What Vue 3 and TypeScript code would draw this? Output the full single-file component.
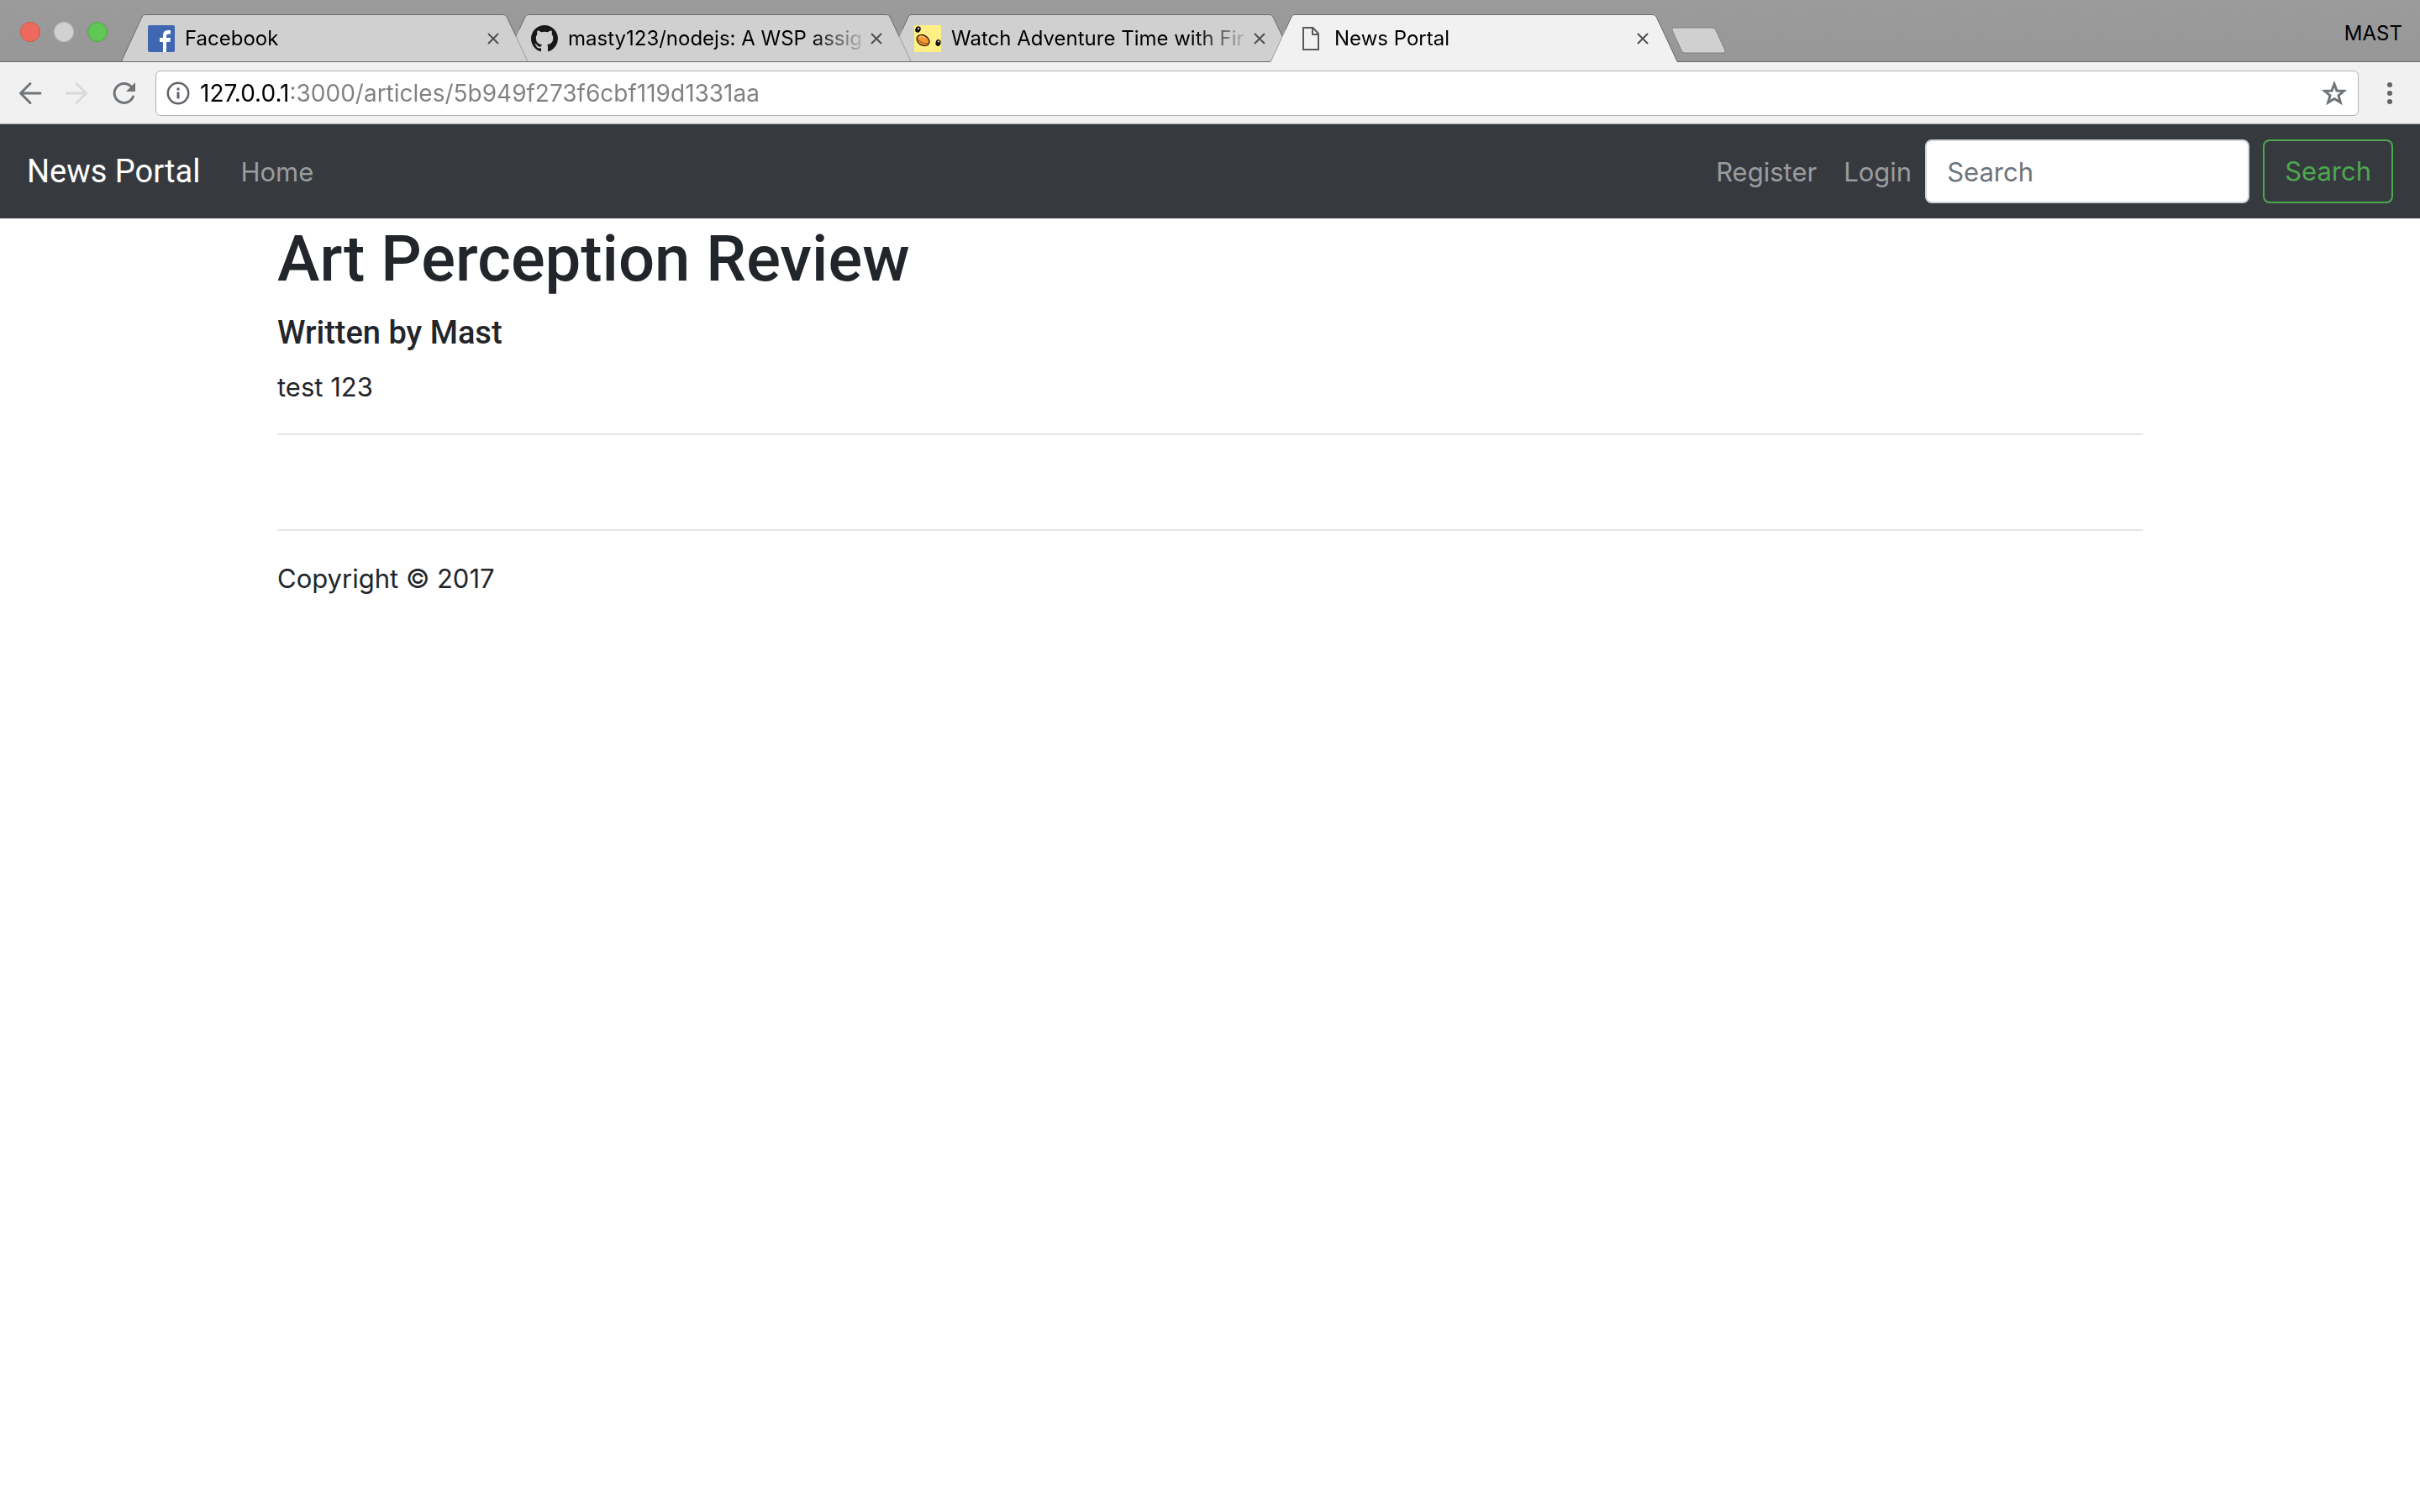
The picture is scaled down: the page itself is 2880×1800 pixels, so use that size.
<script setup lang="ts">
import { ref } from 'vue'

type Favicon = 'facebook' | 'github' | 'cartoon' | 'document'

interface Tab {
  title: string
  icon: Favicon
  active: boolean
}

const tabs: Tab[] = [
  { title: 'Facebook', icon: 'facebook', active: false },
  { title: 'masty123/nodejs: A WSP assig', icon: 'github', active: false },
  { title: 'Watch Adventure Time with Fin', icon: 'cartoon', active: false },
  { title: 'News Portal', icon: 'document', active: true },
]

const address = ref('127.0.0.1:3000/articles/5b949f273f6cbf119d1331aa')
const query = ref('')
</script>

<template>
  <div class="window">
    <header class="chrome">
      <div class="tab-strip">
        <div class="lights">
          <button class="light close" type="button" aria-label="Close window"></button>
          <button class="light minimize" type="button" aria-label="Minimize window"></button>
          <button class="light zoom" type="button" aria-label="Zoom window"></button>
        </div>

        <div class="tabs">
          <div
            v-for="(tab, i) in tabs"
            :key="tab.title"
            class="tab"
            :class="{ active: tab.active }"
            :style="{ zIndex: tab.active ? 10 : tabs.length - i }"
          >
            <svg class="tab-shape" viewBox="0 0 484 57" aria-hidden="true">
              <path class="fill" d="M0 57 L25 3 Q26 0 29 0 H455 Q458 0 459 3 L484 57 Z" />
              <path class="edge" d="M18 18 L25 3 Q26 0.500 29 0.500 H455 Q458 0.500 459 3 L470 26" />
              <path class="edge" :class="{ soft: i > 0 }" d="M0.500 56 L18 18" />
              <path class="edge" :class="{ soft: !tab.active }" d="M470 26 L484 56" />
            </svg>

            <svg v-if="tab.icon === 'facebook'" class="favicon" viewBox="0 0 32 32" aria-hidden="true">
              <rect width="32" height="32" rx="2" fill="#4267b2" />
              <path fill="#fff" d="M18 32 V20 H14 V15 H18 V12 Q18 6 24 6 H27 V10.500 H25 Q22 10.500 22 13 V15 H27 L26.400 20 H22 V32 Z" />
            </svg>
            <svg v-else-if="tab.icon === 'github'" class="favicon" viewBox="0 0 16 16" aria-hidden="true">
              <path
                fill="#191717"
                d="M8 0C3.580 0 0 3.580 0 8c0 3.540 2.290 6.530 5.470 7.590.4.070.55-.17.55-.38 0-.19-.01-.82-.01-1.490-2.010.37-2.530-.49-2.690-.94-.09-.23-.48-.94-.82-1.130-.28-.15-.68-.52-.01-.53.63-.01 1.080.58 1.230.82.72 1.210 1.870.87 2.330.66.070-.52.28-.87.51-1.070-1.780-.2-3.640-.89-3.640-3.950 0-.87.31-1.590.82-2.150-.08-.2-.36-1.020.08-2.120 0 0 .67-.21 2.200.82.64-.18 1.320-.27 2-.27s1.360.09 2 .27c1.530-1.040 2.200-.82 2.200-.82.44 1.100.16 1.920.08 2.120.51.56.82 1.270.82 2.150 0 3.070-1.870 3.750-3.650 3.950.29.25.54.73.54 1.480 0 1.070-.01 1.930-.01 2.200 0 .21.15.46.55.38A8.010 8.010 0 0 0 16 8c0-4.420-3.580-8-8-8z"
              />
            </svg>
            <svg v-else-if="tab.icon === 'cartoon'" class="favicon" viewBox="0 0 32 32" aria-hidden="true">
              <rect width="32" height="32" fill="#ffef84" />
              <ellipse cx="4.500" cy="5" rx="3.200" ry="3.800" fill="#111" transform="rotate(20 4.500 5)" />
              <circle cx="5" cy="4" r="1" fill="#fff" />
              <ellipse cx="28.500" cy="21" rx="3" ry="4" fill="#111" transform="rotate(15 28.500 21)" />
              <circle cx="29" cy="19.500" r="1" fill="#fff" />
              <ellipse cx="10.500" cy="18" rx="8" ry="5.800" fill="#f39a35" stroke="#3a210c" stroke-width="1.400" transform="rotate(30 10.500 18)" />
              <path d="M3.500 16 Q9 23 17.500 21.500" fill="none" stroke="#9c4d12" stroke-width="1.200" />
              <path d="M6 14 Q9 12 13 16" fill="none" stroke="#ffc277" stroke-width="1.500" />
            </svg>
            <svg v-else class="favicon" viewBox="0 0 32 32" aria-hidden="true">
              <path fill="none" stroke="#5a5a5a" stroke-width="2" d="M7 3 H18.500 L25 10 V29 H7 Z M18 3 V11 H25" />
            </svg>

            <span class="tab-title">{{ tab.title }}</span>
            <button class="tab-close" type="button" aria-label="Close tab">
              <svg viewBox="0 0 14 14" aria-hidden="true">
                <path d="M1 1 L13 13 M13 1 L1 13" />
              </svg>
            </button>
          </div>
          <button class="new-tab" type="button" aria-label="New tab">
            <svg viewBox="0 0 68 34" aria-hidden="true">
              <path d="M4 1 H50 Q53 1 54 4 L65 28 Q66 31 63 31 H17 Q14 31 13 28 L2 4 Q1 1 4 1 Z" />
            </svg>
          </button>
        </div>

        <span class="profile">MAST</span>
      </div>

      <div class="toolbar">
        <button class="tool" type="button" aria-label="Back">
          <svg viewBox="0 0 28 28" aria-hidden="true">
            <path class="stroke" d="M26 14 H3 M14 2.500 L2.500 14 L14 25.500" />
          </svg>
        </button>
        <button class="tool disabled" type="button" aria-label="Forward" disabled>
          <svg viewBox="0 0 28 28" aria-hidden="true">
            <path class="stroke" d="M1 14 H24 M13 2.500 L24.500 14 L13 25.500" />
          </svg>
        </button>
        <button class="tool" type="button" aria-label="Reload">
          <svg viewBox="0 0 28 28" aria-hidden="true">
            <path class="stroke" d="M22 6 A11.500 11.500 0 1 0 24.400 18" />
            <path class="solid" d="M27 1 V12 H16 Z" />
          </svg>
        </button>

        <div class="omnibox">
          <svg class="info" viewBox="0 0 28 28" aria-hidden="true">
            <circle cx="14" cy="14" r="12.200" fill="none" stroke="#5f6368" stroke-width="2.500" />
            <path fill="#5f6368" d="M12.500 7.500 H15.500 V10.500 H12.500 Z M12.500 12.500 H15.500 V20.500 H12.500 Z" />
          </svg>
          <input v-model="address" class="address" type="text" aria-label="Address" spellcheck="false" />
          <button class="star" type="button" aria-label="Bookmark this page">
            <svg viewBox="0 0 30 30" aria-hidden="true">
              <path d="M15 4 L18 12 L26.500 12.300 L20 17.700 L22.300 26 L15 21.400 L7.700 26 L10 17.700 L3.500 12.300 L12 12 Z" />
            </svg>
          </button>
        </div>

        <button class="menu" type="button" aria-label="Menu">
          <svg viewBox="0 0 6 26" aria-hidden="true">
            <circle cx="3" cy="3" r="3" />
            <circle cx="3" cy="13" r="3" />
            <circle cx="3" cy="23" r="3" />
          </svg>
        </button>
      </div>
    </header>

    <nav class="navbar">
      <a class="brand" href="#">News Portal</a>
      <a class="nav-link" href="#">Home</a>
      <div class="nav-end">
        <a class="nav-link" href="#">Register</a>
        <a class="nav-link" href="#">Login</a>
        <form class="search" @submit.prevent>
          <input v-model="query" class="search-input" type="text" placeholder="Search" aria-label="Search" />
          <button class="search-button" type="submit">Search</button>
        </form>
      </div>
    </nav>

    <main class="container">
      <h1>Art Perception Review</h1>
      <h5>Written by Mast</h5>
      <p>test 123</p>
      <hr />
      <br />
      <hr />
      <footer>
        <p>Copyright © 2017</p>
      </footer>
    </main>
  </div>
</template>

<style>
body {
  margin: 0;
  background: #fff;
}
</style>

<style scoped>
.window {
  font-family: Inter, 'Liberation Sans', sans-serif;
  font-size: 31px;
  line-height: 48px;
  color: #222529;
}

button {
  margin: 0;
  padding: 0;
  border: 0;
  background: none;
  font: inherit;
  color: inherit;
}

input {
  box-sizing: border-box;
  margin: 0;
  border: 0;
  font: inherit;
  outline: none;
}

svg {
  display: block;
}

a {
  text-decoration: none;
}

.tab-strip {
  display: flex;
  align-items: flex-end;
  box-sizing: border-box;
  height: 74px;
  background: linear-gradient(#9b9b9b, #979797);
  box-shadow: inset 0 -1px #6b6b6b;
}

.lights {
  display: flex;
  gap: 16px;
  padding: 0 16px 24px 24px;
}

.light {
  box-sizing: border-box;
  width: 24px;
  height: 24px;
  border: 1px solid;
  border-radius: 50%;
}

.close {
  background: #ee6a5f;
  border-color: #d9544a;
}

.minimize {
  background: #d1d1d1;
  border-color: #c0c0c0;
}

.zoom {
  background: #61c654;
  border-color: #4fa73f;
}

.tabs {
  display: flex;
  flex: 1;
  align-items: flex-end;
}

.tab {
  display: grid;
  grid-template-columns: 32px 348px 14px;
  column-gap: 12px;
  align-items: center;
  box-sizing: border-box;
  width: 484px;
  height: 57px;
  margin-right: -28px;
  padding-left: 32px;
  position: relative;
}

.tab-shape {
  position: absolute;
  inset: 0;
  z-index: -1;
  width: 484px;
  height: 57px;
}

.fill {
  fill: #d0d0d0;
}

.active .fill {
  fill: #f1f1f1;
}

.edge {
  fill: none;
  stroke: #6b6b6b;
  stroke-width: 1;
}

.soft {
  stroke: #9c9c9c;
}

.tab:not(.active) .fill {
  clip-path: inset(0 0 1px 0);
}

.favicon {
  width: 32px;
  height: 32px;
}

.tab-title {
  font-size: 24px;
  line-height: 32px;
  color: #000;
  white-space: nowrap;
  mask-image: linear-gradient(to right, #000 290px, transparent 358px);
}

.tab-close svg {
  width: 14px;
  height: 14px;
  fill: none;
  stroke: #505050;
  stroke-width: 2;
}

.new-tab {
  margin: 0 0 8px 20px;
}

.new-tab svg {
  width: 68px;
  height: 34px;
  fill: #d0d0d0;
  stroke: #808080;
  stroke-width: 1;
}

.profile {
  padding: 0 21px 18px 0;
  font-size: 24px;
  line-height: 32px;
  color: #000;
}

.toolbar {
  display: flex;
  align-items: center;
  box-sizing: border-box;
  height: 74px;
  padding: 0 33px 0 22px;
  background: #f1f1f1;
  border-bottom: 1px solid #a9a9a9;
}

.tool {
  margin-right: 28px;
}

.tool:nth-child(3) {
  margin-right: 23px;
}

.tool svg {
  width: 28px;
  height: 28px;
}

.stroke {
  fill: none;
  stroke: #6f7479;
  stroke-width: 3;
  stroke-linecap: round;
  stroke-linejoin: round;
}

.solid {
  fill: #6f7479;
}

.disabled .stroke {
  stroke: #d9dadb;
}

.omnibox {
  display: flex;
  flex: 1;
  align-items: center;
  box-sizing: border-box;
  height: 54px;
  margin-right: 34px;
  padding: 0 13px 0 12px;
  background: #fff;
  border: 1px solid #b3b3b3;
  border-radius: 6px;
}

.info {
  width: 28px;
  height: 28px;
}

/* The host is drawn black and the rest of the address grey. */
.address {
  flex: 1;
  height: 48px;
  padding: 0 12px;
  font-size: 28px;
  line-height: 48px;
  color: transparent;
  background: linear-gradient(to right, #000 120px, #808080 120px);
  background-clip: text;
}

.star svg {
  width: 30px;
  height: 30px;
  fill: none;
  stroke: #6f7479;
  stroke-width: 3;
}

.menu svg {
  width: 6px;
  height: 26px;
  fill: #5f6368;
}

.navbar {
  display: flex;
  align-items: center;
  padding: 16px 32px;
  background: #363a3e;
}

.brand {
  margin-right: 32px;
  font-family: Roboto, 'Liberation Sans', sans-serif;
  font-size: 38px;
  line-height: 60px;
  color: #fff;
}

.nav-link {
  padding: 17px 16px 15px;
  color: #9a9c9e;
}

.nav-end {
  display: flex;
  align-items: center;
  margin-left: auto;
}

.search {
  display: flex;
  gap: 16px;
}

.search-input {
  width: 386px;
  height: 76px;
  padding: 12px 24px;
  border: 2px solid #ced4da;
  border-radius: 8px;
  background: #fff;
  color: #495057;
}

.search-input::placeholder {
  color: #6c757d;
  opacity: 1;
}

.search-button {
  padding: 12px 24px;
  border: 2px solid #4da74f;
  border-radius: 8px;
  color: #4da74f;
}

.container {
  box-sizing: border-box;
  max-width: 2280px;
  margin: 0 auto;
  padding: 0 30px;
}

h1,
h5 {
  margin: 0 0 16px;
  font-family: Roboto, 'Liberation Sans', sans-serif;
  font-weight: 500;
}

h1 {
  font-size: 76px;
  line-height: 96px;
}

h5 {
  font-size: 38px;
  line-height: 48px;
}

p {
  margin: 0;
  padding: 1px 0 31px;
}

hr {
  margin: 32px 0;
  border: 0;
  border-top: 2px solid #e4e4e4;
}

p + hr {
  margin-top: 0;
}
</style>
